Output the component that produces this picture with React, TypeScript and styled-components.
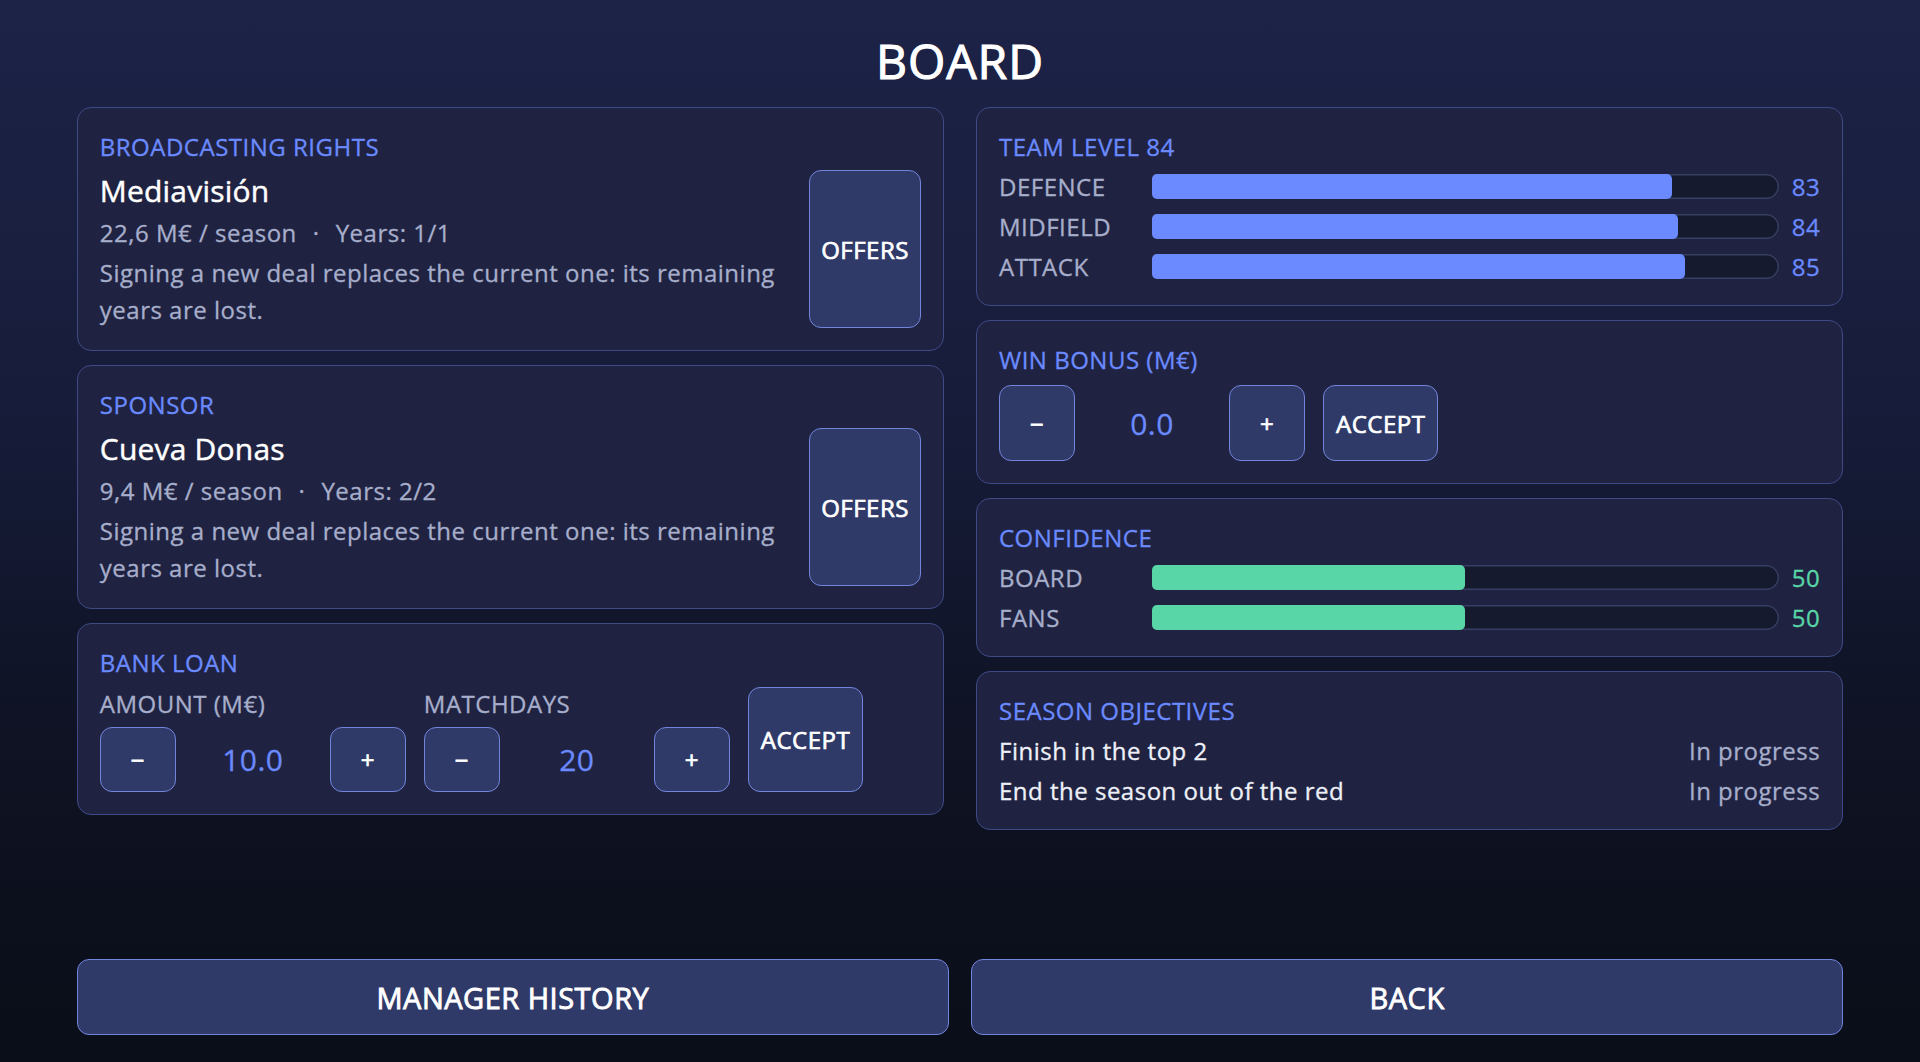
import React from "react";
import styled, { createGlobalStyle } from "styled-components";

const GlobalStyle = createGlobalStyle`
  *, *::before, *::after { box-sizing: border-box; }
  html, body { margin: 0; padding: 0; }
  body {
    font-family: "Open Sans", "Noto Sans", sans-serif;
    font-weight: 400;
    letter-spacing: 0.5px;
    -webkit-text-stroke: 0.3px currentColor;
    background: #0a0e18;
    color: #eef0f8;
  }
`;

const Page = styled.div`
  min-height: 100vh;
  display: flex;
  flex-direction: column;
  padding: 28px 4% 27px;
  background: linear-gradient(180deg, #1d2347 0%, #171c3a 38%, #0e1222 72%, #0a0e18 100%);
`;

const Title = styled.h1`
  margin: 0 0 14px;
  text-align: center;
  font-size: 48px;
  font-weight: 400;
  letter-spacing: 1px;
  -webkit-text-stroke: 1.1px currentColor;
  line-height: normal;
  color: #ffffff;
`;

const Columns = styled.div`
  display: grid;
  grid-template-columns: 1fr 1fr;
  column-gap: 32px;
  align-items: start;
`;

const Column = styled.div`
  display: flex;
  flex-direction: column;
  gap: 14px;
`;

const Card = styled.section`
  display: flex;
  flex-direction: column;
  gap: 7px;
  padding: 22px;
  background: #1f2341;
  border: 1px solid #3e4a86;
  border-radius: 14px;
`;

const SectionLabel = styled.div`
  font-size: 24px;
  line-height: normal;
  color: #6b8aff;
  text-transform: uppercase;
`;

const Button = styled.button<{ $w?: number; $h?: number }>`
  display: flex;
  align-items: center;
  justify-content: center;
  padding: 0 12px;
  font-family: inherit;
  font-size: 24px;
  font-weight: 400;
  letter-spacing: inherit;
  -webkit-text-stroke: 0.7px currentColor;
  color: #ffffff;
  background: #2f3a69;
  border: 1px solid #7385db;
  border-radius: 12px;
  cursor: pointer;
  ${(p) => (p.$w ? `width: ${p.$w}px;` : "")}
  ${(p) => (p.$h ? `height: ${p.$h}px;` : "")}
`;

/* Contract cards (broadcasting, sponsor) */
const DealBody = styled.div`
  display: flex;
  gap: 22px;
  align-items: stretch;
`;

const DealInfo = styled.div`
  flex: 1;
  min-width: 0;
  display: flex;
  flex-direction: column;
  gap: 4px;
`;

const DealName = styled.div`
  font-size: 30px;
  line-height: normal;
  letter-spacing: 0.2px;
  -webkit-text-stroke: 0.45px currentColor;
  color: #ffffff;
`;

const Meta = styled.div`
  font-size: 24px;
  line-height: 36px;
  color: #a7aecb;
`;

const Dot = styled.span`
  margin: 0 16px;
`;

const Note = styled.p`
  margin: 0;
  font-size: 24px;
  line-height: 36.5px;
  color: #a7aecb;
`;

/* Steppers */
const ControlRow = styled.div<{ $top?: number }>`
  display: flex;
  align-items: stretch;
  gap: 18px;
  margin-top: ${(p) => p.$top ?? 0}px;
`;

const Field = styled.div`
  display: flex;
  flex-direction: column;
  gap: 7px;
`;

const FieldLabel = styled.div`
  font-size: 24px;
  line-height: normal;
  color: #a7aecb;
`;

const Stepper = styled.div`
  display: flex;
  align-items: center;
`;

const StepValue = styled.div`
  width: 154px;
  text-align: center;
  font-size: 30px;
  color: #6b8aff;
`;

/* Level / confidence bars */
const StatGrid = styled.div`
  display: grid;
  grid-template-columns: 140px 1fr auto;
  column-gap: 13px;
  row-gap: 7px;
  align-items: center;
  font-size: 24px;
  line-height: normal;
`;

const StatName = styled.span`
  color: #a7aecb;
`;

const Track = styled.div`
  height: 25px;
  border-radius: 12.5px;
  background: #151a2e;
  box-shadow: inset 0 0 0 1.5px #363e63;
`;

const Fill = styled.div<{ $color: string }>`
  height: 100%;
  border-radius: 5px;
  background: ${(p) => p.$color};
`;

const StatValue = styled.span<{ $color: string }>`
  color: ${(p) => p.$color};
  text-align: right;
`;

/* Objectives */
const ObjectiveList = styled.div`
  display: flex;
  flex-direction: column;
  gap: 7px;
`;

const ObjectiveRow = styled.div`
  display: flex;
  justify-content: space-between;
  font-size: 24px;
  line-height: normal;
`;

const ObjectiveName = styled.span`
  color: #eef0f8;
`;

const ObjectiveStatus = styled.span`
  color: #a7aecb;
`;

const Footer = styled.footer`
  margin-top: auto;
  display: grid;
  grid-template-columns: 1fr 1fr;
  gap: 22px;
`;

const FooterButton = styled(Button)`
  height: 76px;
  font-size: 29px;
  -webkit-text-stroke: 0.85px currentColor;
`;

const BLUE = "#6b8aff";
const GREEN = "#58d6a7";

type Deal = { label: string; name: string; amount: string; years: string };

const deals: Deal[] = [
  { label: "Broadcasting rights", name: "Mediavisión", amount: "22,6 M€ / season", years: "Years: 1/1" },
  { label: "Sponsor", name: "Cueva Donas", amount: "9,4 M€ / season", years: "Years: 2/2" },
];

const levels = [
  { name: "DEFENCE", value: 83 },
  { name: "MIDFIELD", value: 84 },
  { name: "ATTACK", value: 85 },
];

const confidence = [
  { name: "BOARD", value: 50 },
  { name: "FANS", value: 50 },
];

const objectives = [
  { name: "Finish in the top 2", status: "In progress" },
  { name: "End the season out of the red", status: "In progress" },
];

function StatBars({ items, color }: { items: { name: string; value: number }[]; color: string }) {
  return (
    <StatGrid>
      {items.map((s) => (
        <React.Fragment key={s.name}>
          <StatName>{s.name}</StatName>
          <Track>
            <Fill $color={color} style={{ width: `${s.value}%` }} />
          </Track>
          <StatValue $color={color}>{s.value}</StatValue>
        </React.Fragment>
      ))}
    </StatGrid>
  );
}

function StepControl({ value, h }: { value: string; h: number }) {
  return (
    <Stepper>
      <Button $w={76} $h={h}>−</Button>
      <StepValue>{value}</StepValue>
      <Button $w={76} $h={h}>+</Button>
    </Stepper>
  );
}

export default function App() {
  return (
    <>
      <GlobalStyle />
      <Page>
        <Title>BOARD</Title>
        <Columns>
          <Column>
            {deals.map((d) => (
              <Card key={d.label}>
                <SectionLabel>{d.label}</SectionLabel>
                <DealBody>
                  <DealInfo>
                    <DealName>{d.name}</DealName>
                    <Meta>
                      {d.amount}
                      <Dot>·</Dot>
                      {d.years}
                    </Meta>
                    <Note>Signing a new deal replaces the current one: its remaining years are lost.</Note>
                  </DealInfo>
                  <Button $w={112}>OFFERS</Button>
                </DealBody>
              </Card>
            ))}
            <Card>
              <SectionLabel>Bank loan</SectionLabel>
              <ControlRow $top={1}>
                <Field>
                  <FieldLabel>AMOUNT (M€)</FieldLabel>
                  <StepControl value="10.0" h={65} />
                </Field>
                <Field>
                  <FieldLabel>MATCHDAYS</FieldLabel>
                  <StepControl value="20" h={65} />
                </Field>
                <Button>ACCEPT</Button>
              </ControlRow>
            </Card>
          </Column>
          <Column>
            <Card>
              <SectionLabel>Team level 84</SectionLabel>
              <StatBars items={levels} color={BLUE} />
            </Card>
            <Card>
              <SectionLabel>Win bonus (M€)</SectionLabel>
              <ControlRow $top={2}>
                <StepControl value="0.0" h={76} />
                <Button $h={76}>ACCEPT</Button>
              </ControlRow>
            </Card>
            <Card>
              <SectionLabel>Confidence</SectionLabel>
              <StatBars items={confidence} color={GREEN} />
            </Card>
            <Card>
              <SectionLabel>Season objectives</SectionLabel>
              <ObjectiveList>
                {objectives.map((o) => (
                  <ObjectiveRow key={o.name}>
                    <ObjectiveName>{o.name}</ObjectiveName>
                    <ObjectiveStatus>{o.status}</ObjectiveStatus>
                  </ObjectiveRow>
                ))}
              </ObjectiveList>
            </Card>
          </Column>
        </Columns>
        <Footer>
          <FooterButton>MANAGER HISTORY</FooterButton>
          <FooterButton>BACK</FooterButton>
        </Footer>
      </Page>
    </>
  );
}
